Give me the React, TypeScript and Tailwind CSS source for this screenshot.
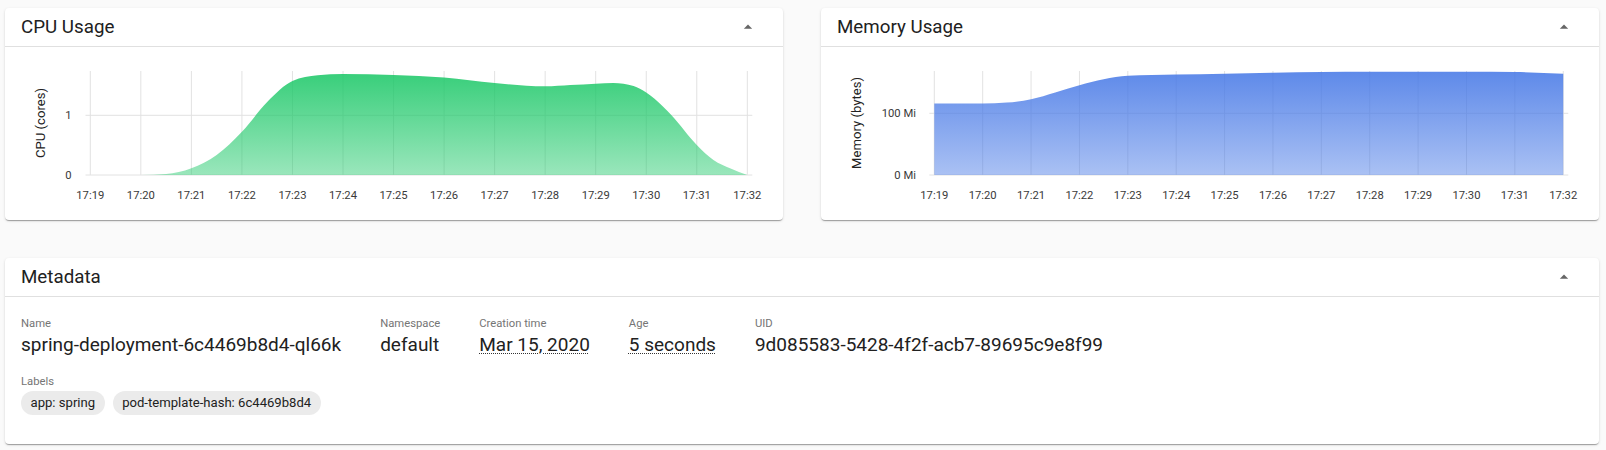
import React from "react";

type Pt = [number, number];

function monotone(pts: Pt[]): string {
  const n = pts.length;
  const s: number[] = [];
  for (let i = 0; i < n - 1; i++) {
    s.push((pts[i + 1][1] - pts[i][1]) / (pts[i + 1][0] - pts[i][0]));
  }
  const t: number[] = new Array(n).fill(0);
  for (let i = 1; i < n - 1; i++) {
    const h0 = pts[i][0] - pts[i - 1][0];
    const h1 = pts[i + 1][0] - pts[i][0];
    const s0 = s[i - 1];
    const s1 = s[i];
    const p = (s0 * h1 + s1 * h0) / (h0 + h1);
    t[i] = (Math.sign(s0) + Math.sign(s1)) * Math.min(Math.abs(s0), Math.abs(s1), 0.5 * Math.abs(p)) || 0;
  }
  t[0] = (3 * s[0] - t[1]) / 2;
  t[n - 1] = (3 * s[n - 2] - t[n - 2]) / 2;
  let d = `M${pts[0][0].toFixed(2)},${pts[0][1].toFixed(2)}`;
  for (let i = 0; i < n - 1; i++) {
    const [x0, y0] = pts[i];
    const [x1, y1] = pts[i + 1];
    const dx = (x1 - x0) / 3;
    d += ` C${(x0 + dx).toFixed(2)},${(y0 + dx * t[i]).toFixed(2)} ${(x1 - dx).toFixed(2)},${(y1 - dx * t[i + 1]).toFixed(2)} ${x1.toFixed(2)},${y1.toFixed(2)}`;
  }
  return d;
}

const TICKS = [
  "17:19", "17:20", "17:21", "17:22", "17:23", "17:24", "17:25",
  "17:26", "17:27", "17:28", "17:29", "17:30", "17:31", "17:32",
];

interface ChartProps {
  x0: number;
  step: number;
  hLines: { y: number; label: string }[];
  hStart: number;
  labelRight: number;
  title: string;
  data: Pt[];
  gradId: string;
  color: string;
  topOpacity: number;
  bottomOpacity: number;
}

function Chart(p: ChartProps) {
  const xs = TICKS.map((_, i) => p.x0 + i * p.step);
  const pts: Pt[] = p.data.map(([t, y]) => [p.x0 + t * p.step, y - 47]);
  const line = monotone(pts);
  const base = 128;
  const area = `${line} L${pts[pts.length - 1][0]},${base} L${pts[0][0]},${base} Z`;
  return (
    <svg width={778} height={173} className="block">
      <defs>
        <linearGradient id={p.gradId} x1="0" y1="0" x2="0" y2="1">
          <stop offset="0" stopColor={p.color} stopOpacity={p.topOpacity} />
          <stop offset="1" stopColor={p.color} stopOpacity={p.bottomOpacity} />
        </linearGradient>
      </defs>
      {xs.map((x, i) => (
        <line key={`v${i}`} x1={x} x2={x} y1={24} y2={128} stroke="#e2e2e2" strokeWidth={1} />
      ))}
      {p.hLines.map((h, i) => (
        <line key={`h${i}`} x1={p.hStart} x2={747.3} y1={h.y} y2={h.y} stroke="#e2e2e2" strokeWidth={1} />
      ))}
      <path d={area} fill={`url(#${p.gradId})`} />
      {p.hLines.map((h, i) => (
        <text
          key={`l${i}`}
          x={p.labelRight}
          y={h.y}
          textAnchor="end"
          dominantBaseline="central"
          fontSize={11.25}
          fill="#3a3a3a"
        >
          {h.label}
        </text>
      ))}
      {xs.map((x, i) => (
        <text
          key={`t${i}`}
          x={x}
          y={148}
          textAnchor="middle"
          dominantBaseline="central"
          fontSize={11.25}
          fill="#3a3a3a"
        >
          {TICKS[i]}
        </text>
      ))}
      <text
        transform="translate(35,76) rotate(-90)"
        textAnchor="middle"
        dominantBaseline="central"
        fontSize={13.125}
        fill="#222222"
      >
        {p.title}
      </text>
    </svg>
  );
}

function ArrowUp() {
  return (
    <svg width="20" height="20" viewBox="0 0 24 24" className="block">
      <path d="M7 14l5-5 5 5z" fill="#666666" />
    </svg>
  );
}

function CardHeader({ title }: { title: string }) {
  return (
    <div className="flex h-[39px] items-center justify-between border-b border-[#e0e0e0] pl-4 pr-[25px]">
      <div className="text-[18.75px] leading-none text-[#212121]">{title}</div>
      <ArrowUp />
    </div>
  );
}

const CPU_DATA: Pt[] = [
  [0, 175], [1, 175], [1.5, 174], [2, 168.3], [2.5, 155], [3, 131.7],
  [3.5, 102], [4, 81], [4.5, 75.2], [5, 74], [6, 75], [7, 77.5], [8, 83],
  [9, 86.3], [9.5, 85], [10, 83.7], [10.35, 83], [10.75, 86], [11, 92.5],
  [11.33, 106.5], [11.5, 115.3], [12, 145], [12.33, 160], [12.67, 168.5],
  [13, 175],
];

const MEM_DATA: Pt[] = [
  [0, 103.5], [1, 103.5], [1.5, 102.6], [2, 99.3], [2.5, 92.5], [3, 85.3],
  [3.5, 79.3], [4, 75.8], [5, 74.5], [6, 73.7], [7, 72.7], [8, 72],
  [9, 71.7], [10, 71.7], [11, 71.7], [12, 72], [13, 73.7],
];

function Field({ label, value, dotted }: { label: string; value: string; dotted?: boolean }) {
  return (
    <div>
      <div className="text-[11.25px] leading-[14px] text-[#757575]">{label}</div>
      <div className="text-[19px] leading-[28px] text-[#212121]">
        {dotted ? (
          <span className="underline decoration-dotted decoration-[#333] decoration-1 underline-offset-[2px]">
            {value}
          </span>
        ) : (
          value
        )}
      </div>
    </div>
  );
}

function Chip({ text }: { text: string }) {
  return (
    <div className="flex h-[24px] items-center rounded-full bg-[#ebebeb] px-[9.5px] text-[13.125px] text-[#212121]">
      {text}
    </div>
  );
}

const CARD =
  "rounded bg-white shadow-[0_2px_1px_-1px_rgba(0,0,0,0.2),0_1px_1px_0_rgba(0,0,0,0.14),0_1px_3px_0_rgba(0,0,0,0.12)]";

export default function App() {
  return (
    <div className="min-h-[450px] bg-[#fafafa] pl-[5px] pr-[7px] pt-[8px] [font-family:Roboto,sans-serif]">
      <div className="grid grid-cols-2 gap-[38px]">
        <div className={CARD}>
          <CardHeader title="CPU Usage" />
          <Chart
            x0={85.3}
            step={50.54}
            hLines={[
              { y: 68.3, label: "1" },
              { y: 128, label: "0" },
            ]}
            hStart={80.5}
            labelRight={66.5}
            title="CPU (cores)"
            data={CPU_DATA}
            gradId="cpuGrad"
            color="rgb(30,200,105)"
            topOpacity={0.88}
            bottomOpacity={0.45}
          />
        </div>
        <div className={CARD}>
          <CardHeader title="Memory Usage" />
          <Chart
            x0={113.3}
            step={48.38}
            hLines={[
              { y: 66.3, label: "100 Mi" },
              { y: 128, label: "0 Mi" },
            ]}
            hStart={108.3}
            labelRight={95}
            title="Memory (bytes)"
            data={MEM_DATA}
            gradId="memGrad"
            color="rgb(70,120,230)"
            topOpacity={0.87}
            bottomOpacity={0.46}
          />
        </div>
      </div>
      <div className={`mt-[38px] ${CARD}`}>
        <CardHeader title="Metadata" />
        <div className="px-4 pb-[29px] pt-[20px]">
          <div className="flex gap-[39px]">
            <Field label="Name" value="spring-deployment-6c4469b8d4-ql66k" />
            <Field label="Namespace" value="default" />
            <Field label="Creation time" value="Mar 15, 2020" dotted />
            <Field label="Age" value="5 seconds" dotted />
            <Field label="UID" value="9d085583-5428-4f2f-acb7-89695c9e8f99" />
          </div>
          <div className="mt-[16px] text-[11.25px] leading-[14px] text-[#757575]">Labels</div>
          <div className="mt-[2px] flex gap-2">
            <Chip text="app: spring" />
            <Chip text="pod-template-hash: 6c4469b8d4" />
          </div>
        </div>
      </div>
    </div>
  );
}
